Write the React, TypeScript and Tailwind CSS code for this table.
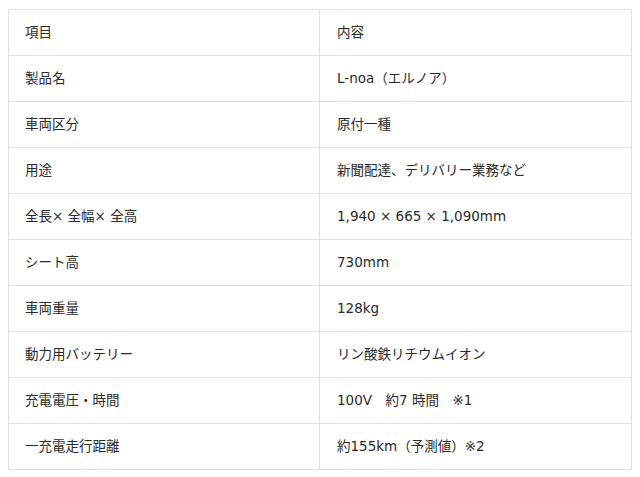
const rows: Array<[string, string]> = [
  ['項目', '内容'],
  ['製品名', 'L-noa（エルノア）'],
  ['車両区分', '原付一種'],
  ['用途', '新聞配達、デリバリー業務など'],
  ['全長× 全幅× 全高', '1,940 × 665 × 1,090mm'],
  ['シート高', '730mm'],
  ['車両重量', '128kg'],
  ['動力用バッテリー', 'リン酸鉄リチウムイオン'],
  ['充電電圧・時間', '100V　約7 時間　※1'],
  ['一充電走行距離', '約155km（予測値）※2'],
];

export default function App() {
  return (
    <div
      className="w-[640px] h-[477px] bg-white pt-[9px] px-[8px] text-[#2a2a2a] text-[13.5px]"
      style={{ fontFamily: '"DejaVu Sans", "Noto Sans CJK JP", sans-serif' }}
    >
      <table className="w-[624px] border-collapse table-fixed">
        <tbody>
          {rows.map(([label, value]) => (
            <tr key={label} className="h-[46px]">
              <td className="w-[311px] border border-[#e2e2e2] pl-[16px] align-middle">{label}</td>
              <td className="border border-[#e2e2e2] pl-[17px] align-middle">{value}</td>
            </tr>
          ))}
        </tbody>
      </table>
    </div>
  );
}
